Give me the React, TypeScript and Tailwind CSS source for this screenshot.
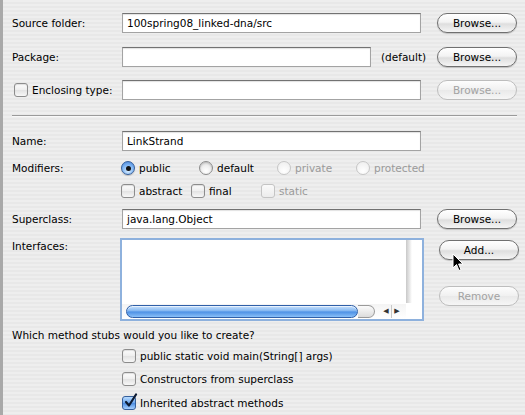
import type { ReactNode } from "react";

const AquaButton = ({ children, disabled = false }: { children: ReactNode; disabled?: boolean }) => (
  <div
    className={`w-[80px] h-[20px] shrink-0 rounded-full border flex items-center justify-center ${
      disabled
        ? "border-[#bdbdbd] text-[#a2a2a2] bg-[linear-gradient(to_bottom,#fdfdfd_0%,#f0f0f0_50%,#e9e9e9_51%,#f6f6f6_100%)]"
        : "border-[#707070] text-black bg-[linear-gradient(to_bottom,#ffffff_0%,#f3f3f3_45%,#dedede_55%,#f5f5f5_100%)] shadow-[0_1px_1px_rgba(0,0,0,0.18)]"
    }`}
  >
    {children}
  </div>
);

const TextField = ({ value = "", width }: { value?: string; width: string }) => (
  <div
    className={`${width} h-[20px] shrink-0 bg-white border border-[#a3a3a3] border-t-[#727272] shadow-[inset_0_1px_1px_rgba(0,0,0,0.12)] pl-[4px] flex items-center text-black`}
  >
    {value}
  </div>
);

const Radio = ({ checked = false, disabled = false }: { checked?: boolean; disabled?: boolean }) => {
  if (checked)
    return (
      <div className="w-[14px] h-[14px] shrink-0 rounded-full border border-[#355f9b] bg-[radial-gradient(circle_at_50%_75%,#d6ecff_0%,#7fb4f2_55%,#3f7fd6_100%)] flex items-center justify-center shadow-[0_1px_1px_rgba(0,0,0,0.2)]">
        <div className="w-[5px] h-[5px] rounded-full bg-[#111]" />
      </div>
    );
  return (
    <div
      className={`w-[14px] h-[14px] shrink-0 rounded-full border ${
        disabled
          ? "border-[#c6c6c6] bg-[radial-gradient(circle_at_50%_75%,#ffffff,#ececec)]"
          : "border-[#8c8c8c] bg-[radial-gradient(circle_at_50%_75%,#ffffff,#dedede)] shadow-[inset_0_1px_2px_rgba(0,0,0,0.2)]"
      }`}
    />
  );
};

const Checkbox = ({ checked = false, disabled = false }: { checked?: boolean; disabled?: boolean }) => {
  if (checked)
    return (
      <div className="relative w-[14px] h-[14px] shrink-0 rounded-[3px] border border-[#355f9b] bg-[linear-gradient(to_bottom,#b9dcff_0%,#6aa5ee_50%,#4a8be0_51%,#a6d0ff_100%)]">
        <svg className="absolute left-[1px] top-[-4px]" width="14" height="16" viewBox="0 0 14 16">
          <path d="M2 9 L5 12.5 L12 1.5" fill="none" stroke="#0d1b33" strokeWidth="2.2" strokeLinecap="round" strokeLinejoin="round" />
        </svg>
      </div>
    );
  return (
    <div
      className={`w-[14px] h-[14px] shrink-0 rounded-[3px] border ${
        disabled
          ? "border-[#c4c4c4] bg-[linear-gradient(to_bottom,#fafafa,#ececec)]"
          : "border-[#8c8c8c] bg-[linear-gradient(to_bottom,#fdfdfd_0%,#eeeeee_50%,#e2e2e2_51%,#f7f7f7_100%)] shadow-[inset_0_1px_1px_rgba(0,0,0,0.12)]"
      }`}
    />
  );
};

const Label = ({ children }: { children: ReactNode }) => <div className="w-[110px] shrink-0 text-black">{children}</div>;

const App = () => {
  return (
    <div className="relative w-[525px] h-[415px] overflow-hidden border-l-[3px] border-[#a9a9a9] bg-[repeating-linear-gradient(to_bottom,#eeeeee_0px,#eeeeee_2px,#e8e8e8_2px,#e8e8e8_4px)] font-['Lucida_Grande','DejaVu_Sans',sans-serif] text-[10.5px] leading-[14px]">
      <div className="pl-[9px] pr-[8px] pt-[13px]">
        {/* Source folder */}
        <div className="flex items-center h-[20px]">
          <Label>Source folder:</Label>
          <TextField width="w-[299px]" value="100spring08_linked-dna/src" />
          <div className="ml-[16px]">
            <AquaButton>Browse...</AquaButton>
          </div>
        </div>

        {/* Package */}
        <div className="flex items-center h-[20px] mt-[14px]">
          <Label>Package:</Label>
          <TextField width="w-[249px]" />
          <div className="w-[66px] pl-[10px] text-black">(default)</div>
          <AquaButton>Browse...</AquaButton>
        </div>

        {/* Enclosing type */}
        <div className="flex items-center h-[20px] mt-[13px]">
          <div className="w-[110px] shrink-0 flex items-center pl-[2px] gap-[4px]">
            <Checkbox />
            <span>Enclosing type:</span>
          </div>
          <TextField width="w-[299px]" />
          <div className="ml-[16px]">
            <AquaButton disabled>Browse...</AquaButton>
          </div>
        </div>

        <div className="mt-[15px] h-[2px] border-t border-[#9a9a9a] border-b border-b-[#f8f8f8]" />

        {/* Name */}
        <div className="flex items-center h-[20px] mt-[14px]">
          <Label>Name:</Label>
          <TextField width="w-[299px]" value="LinkStrand" />
        </div>

        {/* Modifiers */}
        <div className="flex items-center h-[16px] mt-[9px]">
          <Label>Modifiers:</Label>
          <div className="flex items-center -ml-px">
            <div className="w-[78px] flex items-center gap-[4px]">
              <Radio checked />
              <span>public</span>
            </div>
            <div className="w-[78px] flex items-center gap-[4px]">
              <Radio />
              <span>default</span>
            </div>
            <div className="w-[79px] flex items-center gap-[4px] text-[#9a9a9a]">
              <Radio disabled />
              <span>private</span>
            </div>
            <div className="flex items-center gap-[4px] text-[#9a9a9a]">
              <Radio disabled />
              <span>protected</span>
            </div>
          </div>
        </div>
        <div className="flex items-center h-[16px] mt-[7px]">
          <Label>{""}</Label>
          <div className="flex items-center -ml-px">
            <div className="w-[70px] flex items-center gap-[4px]">
              <Checkbox />
              <span>abstract</span>
            </div>
            <div className="w-[70px] flex items-center gap-[4px]">
              <Checkbox />
              <span>final</span>
            </div>
            <div className="flex items-center gap-[4px] text-[#9a9a9a]">
              <Checkbox disabled />
              <span>static</span>
            </div>
          </div>
        </div>

        {/* Superclass */}
        <div className="flex items-center h-[20px] mt-[10px]">
          <Label>Superclass:</Label>
          <TextField width="w-[299px]" value="java.lang.Object" />
          <div className="ml-[16px]">
            <AquaButton>Browse...</AquaButton>
          </div>
        </div>

        {/* Interfaces */}
        <div className="flex items-start mt-[9px]">
          <div className="w-[110px] shrink-0 pt-[1px]">Interfaces:</div>
          <div className="-ml-[2px] w-[304px] h-[83px] shrink-0 border-2 border-[#8eb1dd] bg-white flex flex-col">
            <div className="flex-1 flex">
              <div className="flex-1" />
              <div className="w-[16px] bg-[linear-gradient(to_right,#c8c8c8_0px,#ececec_4px,#ffffff_6px)]" />
            </div>
            <div className="h-[16px] flex items-center">
              <div className="flex-1 h-[15px] flex items-center bg-[linear-gradient(to_bottom,#f4f4f4,#ffffff)] pl-[4px]">
                <div className="w-[232px] h-[13px] rounded-full border border-[#2f5fa8] bg-[linear-gradient(to_bottom,#c9e2fd_0%,#8cbcf2_40%,#4f92e6_55%,#8ac0f8_100%)] shadow-[inset_0_1px_0_rgba(255,255,255,0.6)]" />
                <div className="w-[17px] h-[13px] rounded-r-full border border-l-0 border-[#9a9a9a] bg-[linear-gradient(to_bottom,#fbfbfb,#dcdcdc)]" />
                <div className="ml-[6px] w-[10px] flex justify-center text-[7px] text-[#333]">◀</div>
                <div className="h-[13px] border-l border-[#c8c8c8]" />
                <div className="w-[10px] flex justify-center text-[7px] text-[#333]">▶</div>
              </div>
              <div className="w-[16px] h-[16px] bg-white" />
            </div>
          </div>
          <div className="ml-[15px] flex flex-col">
            <div className="mt-[2px]">
              <AquaButton>Add...</AquaButton>
            </div>
            <div className="mt-[26px]">
              <AquaButton disabled>Remove</AquaButton>
            </div>
          </div>
        </div>

        <div className="mt-[7px] h-[14px]">Which method stubs would you like to create?</div>

        <div className="flex items-center h-[16px] mt-[6px]">
          <Label>{""}</Label>
          <div className="flex items-center gap-[4px]">
            <Checkbox />
            <span>public static void main(String[] args)</span>
          </div>
        </div>
        <div className="flex items-center h-[16px] mt-[7px]">
          <Label>{""}</Label>
          <div className="flex items-center gap-[4px]">
            <Checkbox />
            <span>Constructors from superclass</span>
          </div>
        </div>
        <div className="flex items-center h-[16px] mt-[8px]">
          <Label>{""}</Label>
          <div className="flex items-center gap-[4px]">
            <Checkbox checked />
            <span>Inherited abstract methods</span>
          </div>
        </div>
      </div>

      {/* mouse pointer */}
      <svg className="absolute left-[449px] top-[253px]" width="13" height="19" viewBox="0 0 13 19">
        <path d="M1 1 L1 15 L4.5 11.5 L7 17.5 L9 16.6 L6.6 11 L11 11 Z" fill="#000" stroke="#fff" strokeWidth="1" strokeLinejoin="round" />
      </svg>
    </div>
  );
};

export default App;
